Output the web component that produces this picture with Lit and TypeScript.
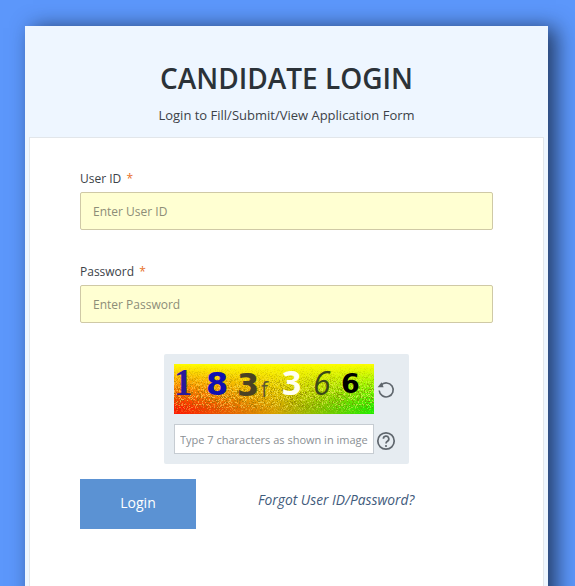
import { LitElement, html, css } from "lit";
import { customElement } from "lit/decorators.js";

@customElement("app-root")
export class AppRoot extends LitElement {
  static styles = css`
    :host {
      display: block;
      height: 586px;
      overflow: hidden;
      background: #5c97fb;
      font-family: "Open Sans", "Noto Sans", sans-serif;
      color: #3c4248;
      padding: 26px 27px 0 25px;
      box-sizing: border-box;
    }
    .card {
      height: 640px;
      background: #eef6ff;
      box-shadow: 8px 2px 20px rgba(15, 25, 45, 0.74);
      padding: 0 4px;
      display: flex;
      flex-direction: column;
    }
    .head {
      height: 111px;
      box-sizing: border-box;
      padding-top: 32px;
      text-align: center;
      flex: none;
    }
    h1 {
      margin: 0;
      font-size: 28px;
      line-height: 40px;
      font-weight: 600;
      color: #2b3238;
    }
    .sub {
      margin-top: 7px;
      font-size: 13px;
      line-height: 20px;
      color: #3c4248;
    }
    .panel {
      flex: 1;
      background: #fff;
      border: 1px solid #e2e6ea;
      border-bottom: none;
      padding: 28px 50px 0 50px;
    }
    .field {
      display: flex;
      flex-direction: column;
      height: 93px;
    }
    label {
      font-size: 12px;
      line-height: 26px;
      color: #3c4248;
    }
    .star {
      color: #e8702a;
      margin-left: 2px;
    }
    .inp {
      width: 413px;
      height: 38px;
      box-sizing: border-box;
      border: 1px solid #cfc9a6;
      border-radius: 2px;
      background: #ffffd2;
      padding: 0 12px;
      font: 12px "Open Sans", sans-serif;
      color: #333;
    }
    .inp::placeholder {
      color: #8d8d78;
      opacity: 1;
    }
    .captcha {
      width: 245px;
      height: 110px;
      box-sizing: border-box;
      margin: 2px 0 0 84px;
      padding: 10px;
      background: #e6ecf1;
      border-radius: 2px;
      display: grid;
      grid-template-columns: 200px 24px;
      grid-template-rows: 50px 30px;
      row-gap: 10px;
      align-items: center;
      justify-items: center;
    }
    .img {
      position: relative;
      width: 200px;
      height: 50px;
      background: linear-gradient(to bottom, #ffff00 0%, rgba(255, 255, 0, 0) 88%),
        linear-gradient(to right, #ff1500 0%, #d8a000 50%, #20f000 100%);
    }
    .img svg {
      position: absolute;
      inset: 0;
    }
    .ch {
      position: absolute;
      top: 0;
    }
    .c1 { left: 0; font: 700 37px/38px "Liberation Serif", serif; color: #2a1a9a; }
    .c2 { left: 32px; font: 700 32px/40px "DejaVu Sans", sans-serif; color: #1010b0; }
    .c3 { left: 63px; font: 700 32px/43px "DejaVu Sans", sans-serif; color: #4a4224; }
    .c4 { left: 87px; top: 5px; font: 400 21px/40px "Open Sans", sans-serif; color: #5a5a30; }
    .c5 { left: 108px; font: 700 34px/36px "Open Sans", sans-serif; color: #fffff0; }
    .c6 { left: 139px; font: italic 400 32px/38px "Open Sans", sans-serif; color: #3c4a18; }
    .c7 { left: 167px; font: 700 27px/40px "DejaVu Sans", sans-serif; color: #000; }
    .cap-inp {
      width: 200px;
      height: 30px;
      box-sizing: border-box;
      border: 1px solid #c6ccd2;
      background: #fff;
      padding: 1px 5px 0;
      font: 11px "Open Sans", sans-serif;
    }
    .cap-inp::placeholder {
      color: #8a8f94;
      opacity: 1;
    }
    .help {
      margin-top: 3px;
    }
    .actions {
      display: flex;
      align-items: flex-start;
      margin-top: 15px;
    }
    button {
      width: 116px;
      height: 50px;
      border: none;
      background: #5b92d3;
      color: #fff;
      font: 14px/46px "Open Sans", sans-serif;
      padding: 0 0 2px;
    }
    a {
      margin: 11px 0 0 62px;
      font-size: 13.8px;
      line-height: 20px;
      font-style: italic;
      color: #3f5b7c;
      text-decoration: none;
    }
  `;

  render() {
    return html`
      <div class="card">
        <div class="head">
          <h1>CANDIDATE LOGIN</h1>
          <div class="sub">Login to Fill/Submit/View Application Form</div>
        </div>
        <div class="panel">
          <div class="field">
            <label>User ID <span class="star">*</span></label>
            <input class="inp" placeholder="Enter User ID" />
          </div>
          <div class="field">
            <label>Password <span class="star">*</span></label>
            <input class="inp" placeholder="Enter Password" />
          </div>
          <div class="captcha">
            <div class="img">
              <svg width="200" height="50">
                <defs>
                  <filter id="n" x="0" y="0" width="100%" height="100%">
                    <feTurbulence type="fractalNoise" baseFrequency="1.6" numOctaves="1" seed="4" />
                    <feColorMatrix
                      values="0 0 0 0 0.2  0 0 0 0 0.15  0 0 0 0 0  10 0 0 0 -5.2"
                    />
                  </filter>
                  <filter id="n2" x="0" y="0" width="100%" height="100%">
                    <feTurbulence type="fractalNoise" baseFrequency="1.6" numOctaves="1" seed="11" />
                    <feColorMatrix
                      values="0 0 0 0 1  0 0 0 0 0.9  0 0 0 0 0.15  10 0 0 0 -5.4"
                    />
                  </filter>
                  <linearGradient id="g" x1="0" y1="0" x2="0" y2="1">
                    <stop offset="0" stop-color="#fff" stop-opacity="0" />
                    <stop offset="0.6" stop-color="#fff" stop-opacity="0.6" />
                    <stop offset="0.85" stop-color="#fff" stop-opacity="0.5" />
                    <stop offset="1" stop-color="#fff" stop-opacity="0.05" />
                  </linearGradient>
                  <mask id="m"><rect width="200" height="50" fill="url(#g)" /></mask>
                </defs>
                <g mask="url(#m)">
                  <rect width="200" height="50" filter="url(#n)" />
                  <rect width="200" height="50" filter="url(#n2)" />
                </g>
              </svg>
              <span class="ch c1">1</span>
              <span class="ch c2">8</span>
              <span class="ch c3">3</span>
              <span class="ch c4">f</span>
              <span class="ch c5">3</span>
              <span class="ch c6">6</span>
              <span class="ch c7">6</span>
            </div>
            <svg width="20" height="20" viewBox="0 0 20 20" fill="none" stroke="#5f666d" stroke-width="1.6">
              <path d="M5 6.2A7 7 0 1 1 3.2 11.5" />
              <path d="M1.6 8.2 L7.6 8.2 L5.6 3.2 Z" fill="#5f666d" stroke="none" />
            </svg>
            <input class="cap-inp" placeholder="Type 7 characters as shown in image" />
            <svg class="help" width="20" height="20" viewBox="0 0 20 20" fill="none">
              <circle cx="10" cy="10" r="8.2" stroke="#5f666d" stroke-width="1.7" />
              <path d="M7.4 7.8A2.7 2.7 0 1 1 11.4 10.2C10.4 10.8 10 11.2 10 12.4" stroke="#5f666d" stroke-width="1.7" />
              <circle cx="10" cy="15" r="1.1" fill="#5f666d" />
            </svg>
          </div>
          <div class="actions">
            <button>Login</button>
            <a href="#">Forgot User ID/Password?</a>
          </div>
        </div>
      </div>
    `;
  }
}
